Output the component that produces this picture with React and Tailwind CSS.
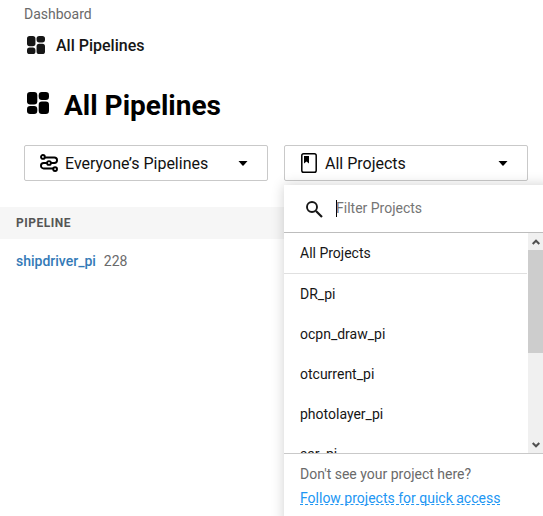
const projects = ["DR_pi", "ocpn_draw_pi", "otcurrent_pi", "photolayer_pi", "sar_pi"];

function DashboardIcon({ className }) {
  return (
    <svg viewBox="0 0 22 22" className={className} fill="currentColor">
      <rect x="0" y="0" width="10.300" height="12.400" rx="3.2" />
      <rect x="11.700" y="0" width="10.300" height="7.900" rx="3.2" />
      <rect x="0" y="14.100" width="10.300" height="7.900" rx="3.2" />
      <rect x="11.700" y="9.600" width="10.300" height="12.400" rx="3.2" />
    </svg>
  );
}

function PipelineIcon() {
  return (
    <svg viewBox="0 0 18 18" className="h-[18px] w-[18px] shrink-0" fill="none" stroke="#000" strokeWidth="1.9">
      <circle cx="2.9" cy="2.9" r="1.9" />
      <circle cx="9" cy="9" r="1.9" />
      <circle cx="15.100" cy="15.100" r="1.9" />
      <path d="M4.8 3.500H14.300a2.700 2.700 0 0 1 0 5.500H11M7 9H3.700a2.700 2.700 0 0 0 0 5.500h9.400" />
    </svg>
  );
}

function ProjectIcon() {
  return (
    <svg viewBox="0 0 16 20" className="ml-px h-5 w-4 shrink-0">
      <rect x="0.8" y="0.8" width="14.4" height="18.4" rx="1.8" fill="none" stroke="#000" strokeWidth="1.5" />
      <path d="M3 3h5v7.500L5.500 8.500 3 10.500z" fill="#000" />
    </svg>
  );
}

function Caret() {
  return (
    <svg viewBox="0 0 10 5" className="ml-auto h-[5px] w-[10px] shrink-0">
      <path d="M0.500 0h9L5.300 4.800h-.6z" fill="#000" />
    </svg>
  );
}

function FilterButton({ icon, children }) {
  return (
    <button className="flex h-9 w-[244px] items-center rounded-[2px] border border-[#c9c9c9] bg-white pr-[19px] pl-[15px] text-base text-[#111]">
      {icon}
      {children}
      <Caret />
    </button>
  );
}

function ScrollBar() {
  return (
    <div className="flex w-[15px] shrink-0 flex-col bg-[#f0f0f0]">
      <div className="flex h-[17px] items-center justify-center">
        <svg viewBox="0 0 8 6" className="h-1.5 w-2" fill="none" stroke="#505050" strokeWidth="2">
          <path d="M.7 5 4 1.700 7.300 5" />
        </svg>
      </div>
      <div className="h-[103px] bg-[#cdcdcd]" />
      <div className="mt-auto flex h-[17px] items-center justify-center">
        <svg viewBox="0 0 8 6" className="h-1.5 w-2" fill="none" stroke="#505050" strokeWidth="2">
          <path d="M.7 1 4 4.300 7.300 1" />
        </svg>
      </div>
    </div>
  );
}

function ProjectMenu() {
  return (
    <div className="absolute top-[185px] left-[284px] flex h-[340px] w-[267px] flex-col bg-white pr-2 text-sm shadow-[0_0_12px_rgba(0,0,0,0.19)]">
      <div className="flex h-12 shrink-0 items-center border-b border-[#bdbdbd] pl-[22px]">
        <svg viewBox="0 0 17 17" className="mt-px h-[17px] w-[17px]" fill="none" stroke="#161616" strokeWidth="1.900">
          <circle cx="6" cy="6" r="5" />
          <path d="m10 10 6 6" strokeWidth="2.200" />
        </svg>
        <div className="ml-[13px] h-[17px] w-px bg-black" />
        <span className="-ml-px pb-0.5 text-[#757575]">Filter Projects</span>
      </div>
      <div className="flex h-[220px] shrink-0 overflow-hidden">
        <ul className="min-w-0 flex-1 pr-px text-[#161616]">
          <li className="flex h-[41px] items-center border-b border-[#e0e0e0] pl-4">All Projects</li>
          {projects.map((name) => (
            <li key={name} className="flex h-10 items-center pl-4">{name}</li>
          ))}
        </ul>
        <ScrollBar />
      </div>
      <div className="border-t border-[#c9c9c9] pt-2 pl-4 leading-6 text-[#6a6a6a]">
        <p>Don't see your project here?</p>
        <a className="inline-block h-[19px] border-b border-dashed border-[#2196f3] text-[#2196f3]">
          Follow projects for quick access
        </a>
      </div>
    </div>
  );
}

export default function App() {
  return (
    <div className="relative h-[516px] w-[543px] overflow-hidden bg-white font-[Roboto,sans-serif]">
      <header className="pl-6">
        <p className="pt-1 text-sm text-[#6a6a6a]">Dashboard</p>
        <div className="mt-[9px] flex h-6 items-center pl-[3px] text-[#161616]">
          <DashboardIcon className="h-[18px] w-[18px]" />
          <span className="ml-[11px] pt-0.5 text-base font-medium">All Pipelines</span>
        </div>
        <h1 className="mt-7 flex h-10 items-center pl-[3px] text-[28px] font-bold text-black">
          <DashboardIcon className="mb-[5px] h-[22px] w-[22px]" />
          <span className="ml-[15px] pt-0.5">All Pipelines</span>
        </h1>
      </header>
      <div className="mt-5 flex gap-4 pl-6">
        <FilterButton icon={<PipelineIcon />}>
          <span className="ml-[7px] pt-0.5">Everyone’s Pipelines</span>
        </FilterButton>
        <FilterButton icon={<ProjectIcon />}>
          <span className="ml-2 pt-0.5">All Projects</span>
        </FilterButton>
      </div>
      <main className="mt-[26px] text-sm">
        <div className="flex h-8 items-center bg-[#f6f6f6] pl-4 text-xs font-bold tracking-[0.5px] text-[#555]">PIPELINE</div>
        <div className="flex h-11 items-center gap-2 pl-4">
          <a className="font-medium text-[#337ab7]">shipdriver_pi</a>
          <span className="text-[#6a6a6a]">228</span>
        </div>
      </main>
      <ProjectMenu />
    </div>
  );
}
